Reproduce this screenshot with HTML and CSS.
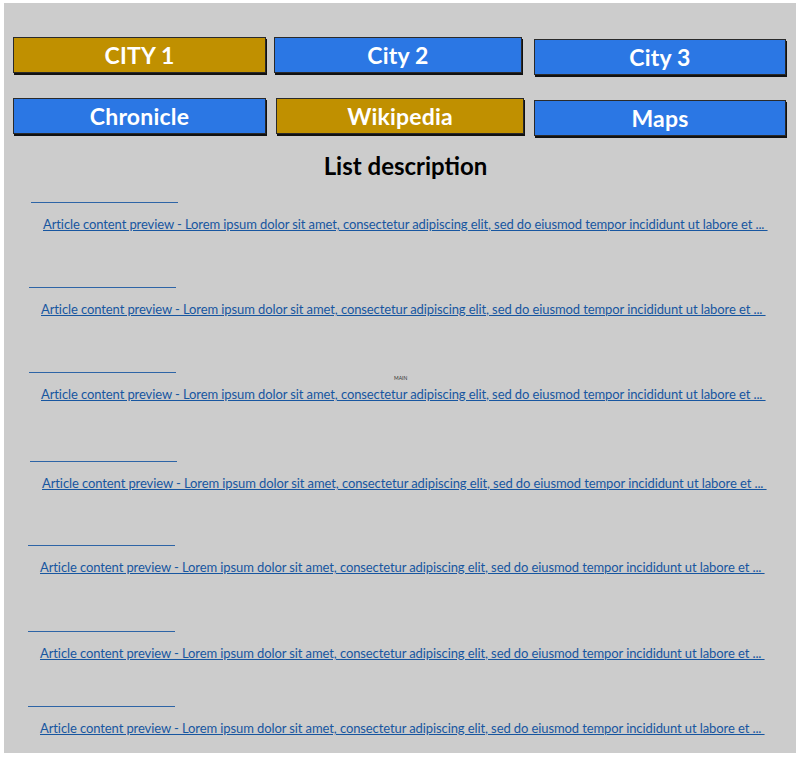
FILE: index.html
```html
<!DOCTYPE html>
<html>
<head>
<meta charset="utf-8">
<link rel="stylesheet" href="styles.css">
</head>
<body>
<div class="panel">
  <nav class="buttons">
    <a class="btn gold">CITY 1</a>
    <a class="btn blue">City 2</a>
    <a class="btn blue low">City 3</a>
    <a class="btn blue">Chronicle</a>
    <a class="btn gold shift">Wikipedia</a>
    <a class="btn blue low">Maps</a>
  </nav>
  <h1 class="title">List description</h1>
  <div class="list">
    <div class="item i1"><span class="rule"></span><a class="link">Article content preview - Lorem ipsum dolor sit amet, consectetur adipiscing elit, sed do eiusmod tempor incididunt ut labore et ... </a></div>
    <div class="item i2"><span class="rule"></span><a class="link">Article content preview - Lorem ipsum dolor sit amet, consectetur adipiscing elit, sed do eiusmod tempor incididunt ut labore et ... </a></div>
    <div class="item i3"><span class="rule"></span><span class="main-label">MAIN</span><a class="link">Article content preview - Lorem ipsum dolor sit amet, consectetur adipiscing elit, sed do eiusmod tempor incididunt ut labore et ... </a></div>
    <div class="item i4"><span class="rule"></span><a class="link">Article content preview - Lorem ipsum dolor sit amet, consectetur adipiscing elit, sed do eiusmod tempor incididunt ut labore et ... </a></div>
    <div class="item i5"><span class="rule"></span><a class="link">Article content preview - Lorem ipsum dolor sit amet, consectetur adipiscing elit, sed do eiusmod tempor incididunt ut labore et ... </a></div>
    <div class="item i6"><span class="rule"></span><a class="link">Article content preview - Lorem ipsum dolor sit amet, consectetur adipiscing elit, sed do eiusmod tempor incididunt ut labore et ... </a></div>
    <div class="item i7"><span class="rule"></span><a class="link">Article content preview - Lorem ipsum dolor sit amet, consectetur adipiscing elit, sed do eiusmod tempor incididunt ut labore et ... </a></div>
  </div>
</div>
</body>
</html>
```
FILE: styles.css
```css
html, body {
  margin: 0;
  padding: 0;
  background: #ffffff;
}
body {
  font-family: "Lato", "Noto Sans", sans-serif;
}
.panel {
  margin: 3px 4px 0 4px;
  width: 792px;
  height: 750px;
  background: #cccccc;
  box-sizing: border-box;
  padding: 34px 0 0 9px;
  position: relative;
}
.buttons {
  display: grid;
  grid-template-columns: 253px 248px 256px;
  column-gap: 8px;
  row-gap: 23px;
  align-items: start;
}
.buttons .btn:nth-child(3n) {
  margin-left: 4px;
}
.btn {
  display: flex;
  align-items: center;
  justify-content: center;
  height: 36px;
  box-sizing: border-box;
  border: 1px solid #2a2a2a;
  box-shadow: 1px 2px 0 #111111;
  color: #ffffff;
  font-family: "Lato", sans-serif;
  font-weight: 700;
  font-size: 23px;
  letter-spacing: 0.2px;
}
.gold { background: #c09000; }
.blue { background: #2b77e4; }
.low { margin-top: 2px; }
.shift { margin-left: 2px; margin-right: -2px; }
.title {
  margin: 16px 0 0 0;
  text-align: center;
  font-family: "Lato", sans-serif;
  font-weight: 700;
  font-size: 24px;
  line-height: 28px;
  color: #000000;
  padding-left: 2px;
}
.list {
  display: flex;
  flex-direction: column;
  margin-top: 22px;
}
.item {
  display: flex;
  flex-direction: column;
  align-items: flex-start;
  height: 85px;
  position: relative;
  padding-left: 18px;
}
.i3 { height: 89px; }
.i4 { height: 84px; padding-left: 17px; }
.i5 { height: 86px; padding-left: 15px; }
.i6 { height: 75px; padding-left: 15px; }
.i7 { padding-left: 15px; }
.i1 { padding-left: 18px; }
.i2, .i3 { padding-left: 16px; }
.rule {
  display: block;
  width: 147px;
  height: 1px;
  background: #2d64a6;
}
.link {
  margin-top: 13px;
  margin-left: 12px;
  font-family: "Lato", sans-serif;
  font-size: 13px;
  letter-spacing: -0.1px;
  line-height: 16px;
  color: #1756a0;
  text-decoration: underline;
  white-space: pre;
}
.main-label {
  position: absolute;
  left: 381px;
  top: 3px;
  font-size: 5px;
  color: #333333;
}
```
